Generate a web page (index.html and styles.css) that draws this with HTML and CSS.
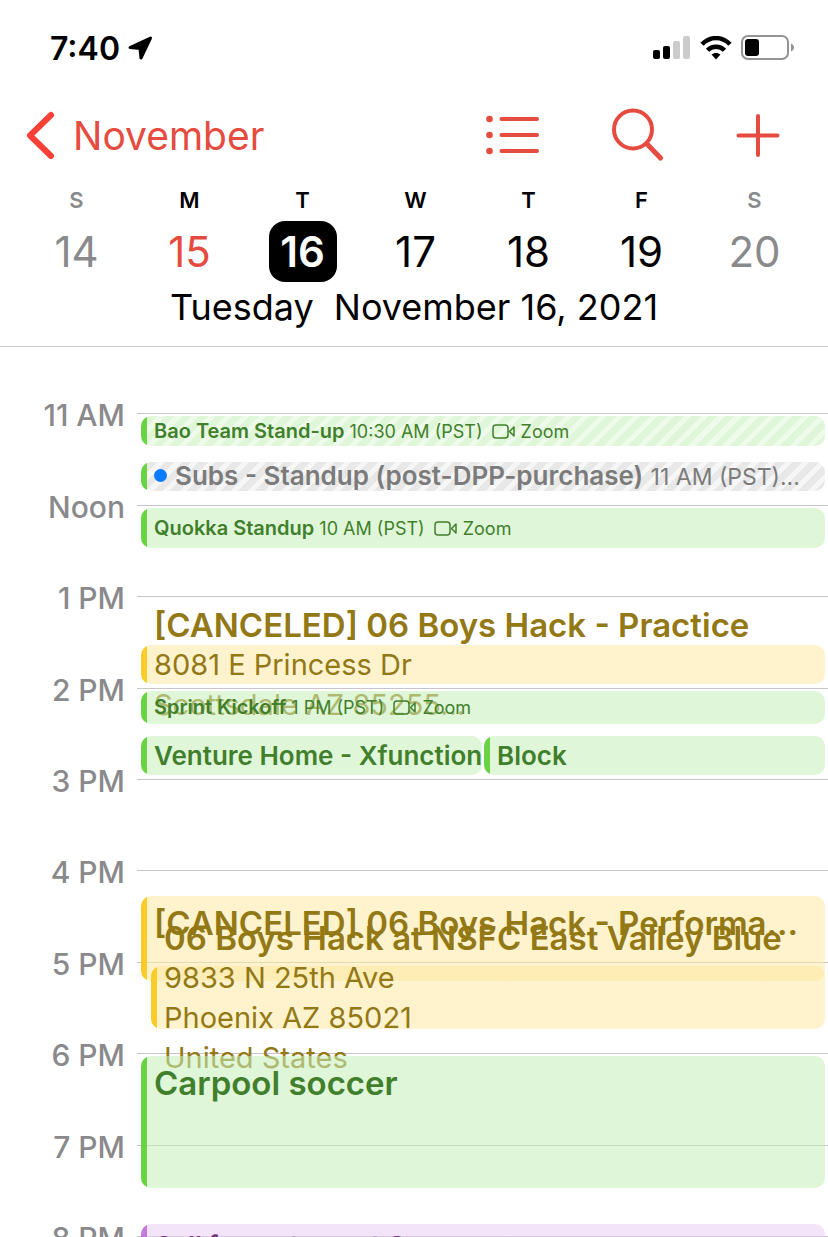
FILE: index.html
```html
<!DOCTYPE html>
<html lang="en">
<head>
  <meta charset="UTF-8" />
  <meta name="viewport" content="width=device-width, initial-scale=1.0" />
  <title>Calendar - November 16, 2021</title>
  <link rel="stylesheet" href="styles.css">
</head>
<body>
  <!-- Shared icons -->
  <svg class="sprite" aria-hidden="true">
    <symbol id="video" viewBox="0 0 24 16">
      <rect x="1" y="1" width="15" height="13" rx="3" />
      <path d="M17.5 7.5 L22 3 V12 Z" />
    </symbol>
  </svg>

  <div class="app">
    <div class="status-bar">
      <div class="status-left">
        <span class="clock">7:40</span>
        <svg class="location" width="26" height="26" viewBox="0 0 26 26">
          <path d="M22.5 3 L13 23 L12 13.500 L2 12.500 Z" />
        </svg>
      </div>
      <div class="status-right">
        <svg width="38" height="24" viewBox="0 0 38 24">
          <rect x="0" y="14" width="7" height="9" rx="2" />
          <rect x="10" y="10" width="7" height="13" rx="2" />
          <rect x="20" y="5" width="7" height="18" rx="2" fill="#cbcbcb" />
          <rect x="30" y="0" width="7" height="23" rx="2" fill="#cbcbcb" />
        </svg>
        <svg width="32" height="24" viewBox="0 0 32 24">
          <g fill="none" stroke="#000" stroke-width="4.500">
            <path d="M2 8.3 C10 0 22 0 30 8.3" />
            <path d="M7.5 14.3 C12 9.4 20 9.4 24.5 14.3" />
          </g>
          <path d="M11.5 18.6 C14 16.4 18 16.4 20.5 18.6 L16 23.5 Z" />
        </svg>
        <svg width="54" height="26" viewBox="0 0 54 26">
          <rect x="1" y="1" width="46" height="23" rx="6" fill="none" stroke="#949494" stroke-width="2" />
          <rect x="4" y="4" width="14" height="17" rx="3" />
          <path d="M50 8.500 C54 10 54 15 50 16.500 Z" fill="#949494" />
        </svg>
      </div>
    </div>

    <header class="header">
      <nav class="nav">
        <button class="back" type="button">
          <svg width="32" height="48" viewBox="0 0 32 48">
            <path d="M26 4 L5 24.500 L26 45" />
          </svg>
          November
        </button>
        <div class="actions">
          <button type="button" aria-label="List">
            <svg width="56" height="56" viewBox="0 0 56 56">
              <path d="M15.500 12 H51 M15.500 28 H51 M15.500 44 H51" />
              <g fill="currentColor" stroke="none">
                <circle cx="3.500" cy="12" r="3.300" />
                <circle cx="3.500" cy="28" r="3.300" />
                <circle cx="3.500" cy="44" r="3.300" />
              </g>
            </svg>
          </button>
          <button type="button" aria-label="Search">
            <svg width="56" height="56" viewBox="0 0 56 56">
              <circle cx="25" cy="22.500" r="19" />
              <path d="M39 37 L52.500 51" stroke-width="5" />
            </svg>
          </button>
          <button type="button" aria-label="Add event">
            <svg width="56" height="56" viewBox="0 0 56 56">
              <path d="M8.500 28.500 H47.500 M28 9 V48" />
            </svg>
          </button>
        </div>
      </nav>

      <div class="week">
        <div class="day weekend"><span>S</span><button type="button">14</button></div>
        <div class="day today"><span>M</span><button type="button">15</button></div>
        <div class="day selected"><span>T</span><button type="button">16</button></div>
        <div class="day"><span>W</span><button type="button">17</button></div>
        <div class="day"><span>T</span><button type="button">18</button></div>
        <div class="day"><span>F</span><button type="button">19</button></div>
        <div class="day weekend"><span>S</span><button type="button">20</button></div>
      </div>

      <h1 class="date"><span>Tuesday</span> <span>November 16, 2021</span></h1>
    </header>

    <main class="timeline">
      <ul class="hours">
        <li><span>11 AM</span></li>
        <li><span>Noon</span></li>
        <li><span>1 PM</span></li>
        <li><span>2 PM</span></li>
        <li><span>3 PM</span></li>
        <li><span>4 PM</span></li>
        <li><span>5 PM</span></li>
        <li><span>6 PM</span></li>
        <li><span>7 PM</span></li>
        <li><span>8 PM</span></li>
      </ul>

      <div class="events">
        <article class="event green tentative small" style="grid-row: 4 / 34">
          <p><b>Bao Team Stand-up</b> 10:30 AM (PST) <svg class="video"><use href="#video" /></svg> Zoom</p>
        </article>
        <article class="event gray tentative medium" style="grid-row: 50 / 79">
          <p><i class="dot"></i><b>Subs - Standup (post-DPP-purchase)</b> <span class="time">11 AM (PST)...</span></p>
        </article>
        <article class="event green small" style="grid-row: 96 / 136">
          <p><b>Quokka Standup</b> 10 AM (PST) <svg class="video"><use href="#video" /></svg> Zoom</p>
        </article>
        <article class="event yellow large" style="grid-row: 233 / 272">
          <h2>[CANCELED] 06 Boys Hack - Practice</h2>
          <p>8081 E Princess Dr</p>
          <p>Scottsdale AZ 85255...</p>
        </article>
        <article class="event green small" style="grid-row: 279 / 312">
          <p><b>Sprint Kickoff</b> 1 PM (PST) <svg class="video"><use href="#video" /></svg> Zoom</p>
        </article>
        <article class="event green medium half clip" style="grid-row: 324 / 363">
          <p><b>Venture Home - Xfunctional</b></p>
        </article>
        <article class="event green medium half second" style="grid-row: 324 / 363">
          <p><b>Block</b></p>
        </article>
        <article class="event yellow large top" style="grid-row: 484 / 569">
          <h2>[CANCELED] 06 Boys Hack - Performa...</h2>
        </article>
        <article class="event yellow large nested" style="grid-row: 554 / 617">
          <h2>06 Boys Hack at NSFC East Valley Blue</h2>
          <p>9833 N 25th Ave</p>
          <p>Phoenix AZ 85021</p>
          <p>United States</p>
        </article>
        <article class="event green large top" style="grid-row: 644 / 776">
          <h2>Carpool soccer</h2>
        </article>
        <article class="event purple medium top" style="grid-row: 812 / 904">
          <p><b>Call for restaurant C</b></p>
        </article>
      </div>
    </main>
  </div>
</body>
</html>
```
FILE: styles.css
```css
/* ------------------ Global Styles ------------------ */
* {
  box-sizing: border-box;
}
body {
  margin: 0;
  background: #fff;
  color: #000;
  font-family: Inter, "Liberation Sans", sans-serif;
}
h1, h2, p, ul {
  margin: 0;
  padding: 0;
  font-weight: 400;
}
button {
  padding: 0;
  border: none;
  background: none;
  color: inherit;
  font: inherit;
  cursor: pointer;
}
svg {
  display: block;
}
.sprite {
  display: none;
}
.app {
  display: flex;
  flex-direction: column;
  height: 100vh;
  overflow: hidden;
}

/* ------------------ Status Bar ------------------ */
.status-bar {
  display: flex;
  justify-content: space-between;
  align-items: center;
  height: 96px;
  padding: 0 33px 0 50px;
}
.status-left, .status-right {
  display: flex;
  align-items: center;
  gap: 8px;
}
.status-right {
  gap: 9px;
}
.clock {
  font-size: 32px;
  font-weight: 600;
}
.location {
  stroke: #000;
  stroke-width: 3;
  stroke-linejoin: round;
}

/* ------------------ Header ------------------ */
.header {
  flex: none;
  border-bottom: 1px solid #c6c6c8;
}
.nav {
  display: flex;
  justify-content: space-between;
  align-items: center;
  height: 78px;
  padding: 0 42px 0 25px;
  color: #e64b40;
}
.nav svg {
  fill: none;
  stroke: currentColor;
  stroke-width: 4;
  stroke-linecap: round;
}
.back {
  display: flex;
  align-items: center;
  gap: 16px;
  font-size: 39px;
}
.back svg {
  stroke: #fb4035;
  stroke-width: 6;
  stroke-linejoin: round;
}
.actions {
  display: flex;
  gap: 66px;
}
.week {
  display: grid;
  grid-template-columns: repeat(7, 1fr);
  padding: 11px 17px 0 20px;
}
.day {
  display: flex;
  flex-direction: column;
  align-items: center;
  gap: 6px;
  font-size: 22px;
  font-weight: 600;
  line-height: 30px;
}
.day button {
  width: 68px;
  height: 61px;
  border-radius: 16px;
  font-size: 42px;
  font-weight: 400;
}
.weekend {
  color: #8a8a8d;
}
.today button {
  color: #e64b40;
}
.selected button {
  background: #000;
  color: #fff;
  font-weight: 600;
}
.date {
  display: flex;
  justify-content: center;
  gap: 20px;
  padding-bottom: 14px;
  font-size: 36px;
  line-height: 50px;
}

/* ------------------ Timeline ------------------ */
.timeline {
  flex: 1;
  display: grid;
  align-content: start;
  min-height: 0;
  padding-top: 66px;
  overflow: hidden;
}
.hours, .events {
  grid-area: 1 / 1;
}
.hours {
  list-style: none;
}
.hours li {
  display: flex;
  gap: 12px;
  height: 91px;
}
.hours li:nth-child(1),
.hours li:nth-child(3),
.hours li:nth-child(6),
.hours li:nth-child(8) {
  height: 92px;
}
.hours li::after {
  content: "";
  flex: 1;
  height: 1px;
  background: #c6c6c8;
}
.hours span {
  width: 125px;
  margin-top: -14px;
  color: #8a8a8d;
  font-size: 30px;
  font-weight: 500;
  line-height: 32px;
  text-align: right;
}

/* ------------------ Events ------------------ */
.events {
  display: grid;
  grid-template-columns: repeat(2, minmax(0, 1fr));
  grid-template-rows: repeat(904, 1px);
  margin: 0 3px 0 141px;
}
.event {
  grid-column: 1 / -1;
  display: flex;
  flex-direction: column;
  justify-content: center;
  padding-left: 13px;
  border-radius: 10px;
  background: linear-gradient(to right, var(--bar) 6px, var(--fill) 6px);
  color: var(--text);
  white-space: nowrap;
}
.event b, .event h2 {
  font-weight: 600;
}
.green {
  --bar: #69d443;
  --fill: rgba(197, 239, 184, 0.55);
  --text: #417f2c;
}
.yellow {
  --bar: #fbcb2a;
  --fill: rgba(253, 233, 162, 0.55);
  --text: #937816;
}
.gray {
  --bar: #69d443;
  --fill: #e8e8e8;
  --text: #7b7b7b;
}
.purple {
  --bar: #c27bd8;
  --fill: rgba(234, 205, 243, 0.55);
  --text: #72387f;
}
.tentative {
  --stripe: #eefbeb;
  background:
    linear-gradient(to right, var(--bar) 6px, transparent 6px),
    repeating-linear-gradient(135deg, var(--stripe) 0 5px, var(--fill) 5px 12px);
}
.gray.tentative {
  --stripe: #f6f6f6;
}
.small {
  font-size: 18px;
  line-height: 24px;
}
.small b {
  font-size: 20px;
}
.medium {
  font-size: 26px;
  line-height: 30px;
}
.large {
  font-size: 29px;
  line-height: 40px;
}
.large h2 {
  font-size: 33px;
}
.top {
  justify-content: flex-start;
  padding-top: 7px;
}
.half {
  grid-column: 1;
  margin-right: 1px;
}
.second {
  grid-column: 2;
  margin: 0 0 0 1px;
}
.clip {
  overflow: hidden;
}
.nested {
  margin-left: 10px;
}
.time {
  font-size: 23px;
}
.dot {
  display: inline-block;
  width: 13px;
  height: 13px;
  margin-right: 8px;
  border-radius: 50%;
  background: #0a7aff;
  vertical-align: 3px;
}
.video {
  display: inline-block;
  width: 24px;
  height: 16px;
  margin: 0 0 0 4px;
  fill: none;
  stroke: currentColor;
  stroke-width: 1.5;
  stroke-linejoin: round;
  vertical-align: -2px;
}
```
